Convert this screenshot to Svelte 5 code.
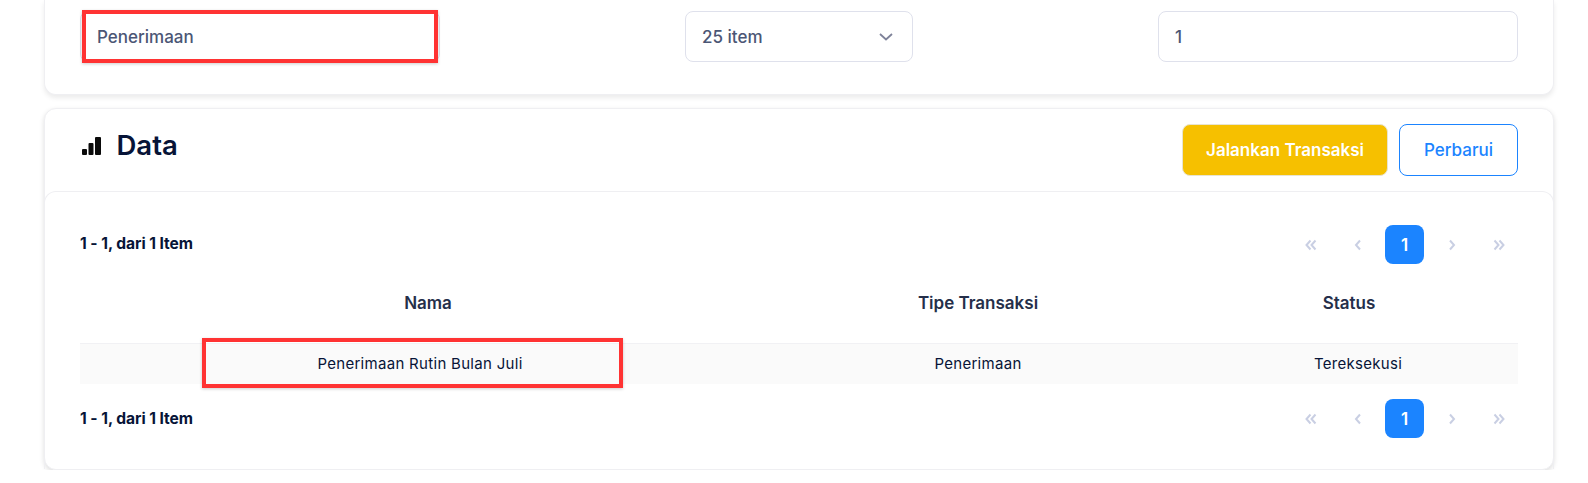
<script>
  const pages = ['first', 'prev', 'active', 'next', 'last'];
  const paths = {
    first: ['M7.5 3.5 3.5 8l4 4.5', 'M12.5 3.5 8.500 8l4 4.500'],
    prev: ['M10 3.500 6 8l4 4.500'],
    next: ['M6 3.500 10 8l-4 4.500'],
    last: ['M3.500 3.500 7.500 8l-4 4.500', 'M8.500 3.500 12.500 8l-4 4.500']
  };
</script>

{#snippet pager()}
  <div class="pager-row">
    <span class="info">1 - 1, dari 1 Item</span>
    <div class="pager">
      {#each pages as p}
        {#if p === 'active'}
          <span class="page active">1</span>
        {:else}
          <span class="page">
            <svg width="16" height="16" viewBox="0 0 16 16" fill="none" stroke="#c9cfe3" stroke-width="2">
              {#each paths[p] as d}<path {d} />{/each}
            </svg>
          </span>
        {/if}
      {/each}
    </div>
  </div>
{/snippet}

<div class="page-wrap">
  <section class="card filters">
    <div class="field first">Penerimaan<span class="mark mark-field"></span></div>
    <div class="field select">
      <span>25 item</span>
      <svg width="16" height="16" viewBox="0 0 16 16" fill="none" stroke="#7e8299" stroke-width="1.8"><path d="M2 5 8 10.500l6-5.500" /></svg>
    </div>
    <div class="field">1</div>
  </section>

  <section class="card data">
    <header class="head">
      <div class="title">
        <svg class="bars" width="19" height="18" viewBox="0 0 19 18" fill="#0a0a0a">
          <rect x="0" y="12" width="5" height="6" rx="1" />
          <rect x="6.500" y="6" width="5" height="12" rx="1" />
          <rect x="13" y="0" width="6" height="18" rx="1" />
        </svg>
        <h2>Data</h2>
      </div>
      <div class="actions">
        <button class="btn run">Jalankan Transaksi</button>
        <button class="btn refresh">Perbarui</button>
      </div>
    </header>

    <div class="body">
      {@render pager()}
      <div class="grid thead">
        <div>Nama</div>
        <div>Tipe Transaksi</div>
        <div>Status</div>
      </div>
      <div class="grid row">
        <div class="name">Penerimaan Rutin Bulan Juli</div>
        <div>Penerimaan</div>
        <div class="state">Tereksekusi</div>
        <span class="mark mark-row"></span>
      </div>
      <div class="bottom">
        {@render pager()}
      </div>
    </div>
  </section>
</div>

<style>
  :global(body) {
    background: #fff;
    font-family: Inter, "Liberation Sans", sans-serif;
  }
  .page-wrap {
    width: 1510px;
    margin-left: 44px;
    display: flex;
    flex-direction: column;
    gap: 13px;
  }
  .card {
    background: #fff;
    border: 1px solid #efeff2;
    border-radius: 12px;
    box-shadow: 0 3px 5px rgba(0, 0, 0, 0.08);
  }
  .data {
    box-shadow: 0 2px 5px rgba(0, 0, 0, 0.13);
  }
  .filters {
    border-top: 0;
    border-radius: 0 0 12px 12px;
    padding: 11px 35px 32px;
    display: flex;
    justify-content: space-between;
  }
  .field {
    width: 360px;
    height: 51px;
    box-sizing: border-box;
    border: 1px solid #dfe1ec;
    border-radius: 8px;
    padding: 0 16px;
    display: flex;
    align-items: center;
    justify-content: space-between;
    font-size: 17px;
    font-weight: 500;
    color: #4b5675;
    position: relative;
  }
  .select {
    width: 228px;
    padding-right: 18px;
  }
  .mark {
    position: absolute;
    border: 4px solid #ff3333;
    box-sizing: border-box;
    box-shadow: 0 1px 3px rgba(0, 0, 0, 0.2);
    pointer-events: none;
  }
  .mark-field {
    left: 1px;
    top: -2px;
    width: 356px;
    height: 53px;
  }
  .head {
    height: 82px;
    box-sizing: border-box;
    padding: 15px 35px 0;
    display: flex;
    justify-content: space-between;
    align-items: flex-start;
  }
  .title {
    display: flex;
    align-items: center;
    gap: 15.500px;
    height: 44px;
    margin-top: -1px;
    padding-left: 2px;
  }
  .bars {
    margin-top: 2px;
  }
  h2 {
    margin: 0;
    font-size: 27.500px;
    font-weight: 600;
    color: #071437;
  }
  .actions {
    display: flex;
    gap: 11px;
  }
  .btn {
    height: 52px;
    box-sizing: border-box;
    border-radius: 8px;
    font: 600 17px Inter, sans-serif;
  }
  .run {
    width: 206px;
    background: #f6c000;
    border: 1px solid #e8e4d0;
    color: #fff;
  }
  .refresh {
    width: 119px;
    background: #fff;
    border: 1px solid #1b84ff;
    color: #1b84ff;
    font-weight: 500;
  }
  .body {
    margin: 0 -1px;
    border: 1px solid #efeff2;
    border-bottom: 0;
    border-radius: 12px 12px 0 0;
    padding: 33px 35px 31px;
  }
  .pager-row {
    display: flex;
    justify-content: space-between;
    align-items: center;
    height: 39px;
  }
  .info {
    font-size: 15.600px;
    font-weight: 700;
    letter-spacing: -0.05px;
    color: #071437;
    margin-top: -3px;
  }
  .bottom .info {
    margin-top: -1px;
  }
  .pager {
    display: flex;
    gap: 8px;
  }
  .page {
    width: 39px;
    height: 39px;
    border-radius: 8px;
    display: flex;
    align-items: center;
    justify-content: center;
  }
  .active {
    background: #1b84ff;
    color: #fff;
    font-size: 17px;
    font-weight: 600;
  }
  .grid {
    display: grid;
    grid-template-columns: 696px 404px 338px;
    text-align: center;
    align-items: center;
  }
  .thead {
    height: 79px;
    box-sizing: border-box;
    padding-bottom: 2px;
    font-size: 17px;
    font-weight: 600;
    color: #252f4a;
  }
  .row {
    height: 41px;
    box-sizing: border-box;
    padding-bottom: 2px;
    background: #fafafa;
    border-top: 1px solid #f1f1f4;
    font-size: 15px;
    letter-spacing: 0.3px;
    color: #071437;
    position: relative;
  }
  .name {
    padding-right: 16px;
  }
  .state {
    padding-left: 18px;
  }
  .mark-row {
    left: 122px;
    top: -6px;
    width: 421px;
    height: 50px;
  }
  .bottom {
    margin-top: 15px;
  }
</style>
